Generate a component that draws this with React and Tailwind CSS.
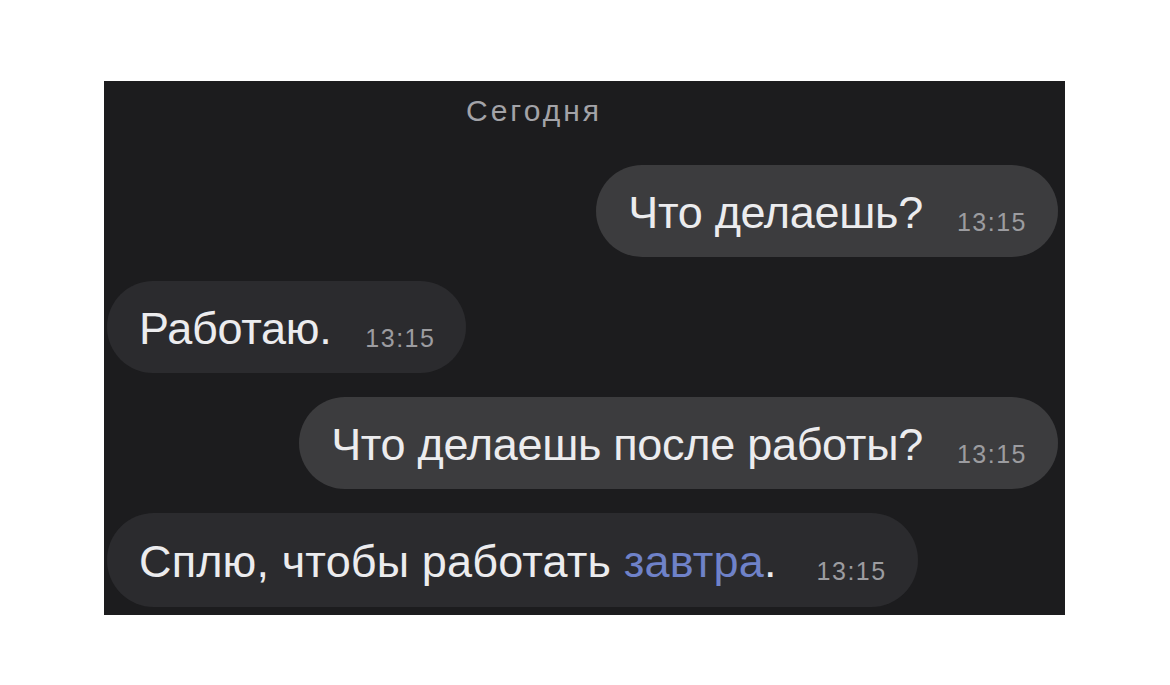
const MESSAGES = [
  { id: 1, out: true, text: "Что делаешь?", time: "13:15" },
  { id: 2, out: false, text: "Работаю.", time: "13:15" },
  { id: 3, out: true, text: "Что делаешь после работы?", time: "13:15" },
  { id: 4, out: false, text: "Сплю, чтобы работать ", link: "завтра", tail: ".", time: "13:15", wide: true },
];

function Bubble({ msg }) {
  return (
    <div className={`flex ${msg.out ? "justify-end" : "justify-start"}`}>
      <div
        className={`flex items-end rounded-full pl-[32px] pr-[31px] ${
          msg.wide ? "h-[94px] pb-[23px]" : "h-[92px] pb-[22px]"
        } ${msg.out ? "bg-[#3c3c3e]" : "bg-[#2b2b2e]"}`}
      >
        <span
          className={`text-[45px] leading-none text-[#ececee] whitespace-nowrap ${
            msg.wide ? "tracking-[0.15px]" : "tracking-[-0.3px]"
          }`}
        >
          {msg.text}
          {msg.link && <span className="text-[#6f82c9]">{msg.link}</span>}
          {msg.tail}
        </span>
        <span
          className={`text-[25px] leading-none text-[#9c9ca0] tracking-[1.5px] whitespace-nowrap ${
            msg.wide ? "ml-[40px]" : "ml-[34px]"
          }`}
        >
          {msg.time}
        </span>
      </div>
    </div>
  );
}

export default function App() {
  return (
    <div className="w-[1170px] h-[685px] bg-white pt-[81px] pl-[104px]" style={{ fontFamily: '"Liberation Sans", Arial, sans-serif' }}>
      <div className="w-[961px] h-[534px] bg-[#1c1c1e] flex flex-col pl-[3px] pr-[7px]">
        <div className="h-[84px] pt-[15px] pl-[359px] text-[30px] leading-none text-[#a3a3a8] tracking-[3px]">
          Сегодня
        </div>
        <div className="flex flex-col gap-[24px]">
          {MESSAGES.map((m) => (
            <Bubble key={m.id} msg={m} />
          ))}
        </div>
      </div>
    </div>
  );
}
